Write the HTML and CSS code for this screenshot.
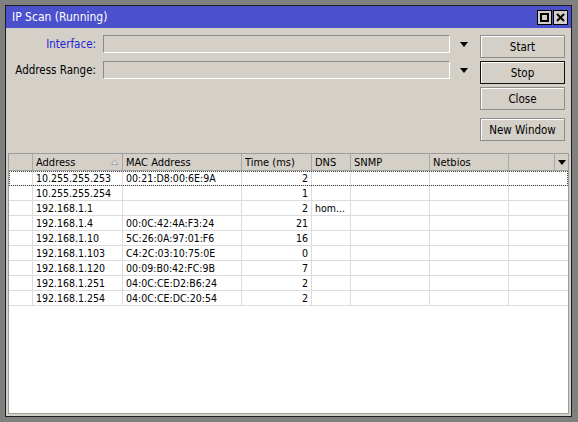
FILE: index.html
```html
<!DOCTYPE html>
<html>
<head>
<meta charset="utf-8">
<link rel="stylesheet" href="styles.css">
</head>
<body>
<div class="window">
  <div class="titlebar">
    <span class="title">IP Scan (Running)</span>
    <div class="tbtns">
      <span class="tbtn"><svg width="13" height="13" viewBox="0 0 13 13"><rect x="3" y="3" width="7" height="7" fill="none" stroke="#000" stroke-width="2"/></svg></span>
      <span class="tbtn"><svg width="13" height="13" viewBox="0 0 13 13"><path d="M3 3 L10 10 M10 3 L3 10" stroke="#000" stroke-width="2"/></svg></span>
    </div>
  </div>
  <div class="body">
    <div class="top">
      <div class="form">
        <div class="frow">
          <span class="lbl blue">Interface:</span>
          <div class="input"></div>
          <span class="drop"><svg width="8" height="5" viewBox="0 0 8 5"><polygon points="0,0 8,0 4,5" fill="#000"/></svg></span>
        </div>
        <div class="frow">
          <span class="lbl">Address Range:</span>
          <div class="input"></div>
          <span class="drop"><svg width="8" height="5" viewBox="0 0 8 5"><polygon points="0,0 8,0 4,5" fill="#000"/></svg></span>
        </div>
      </div>
      <div class="buttons">
        <div class="btn">Start</div>
        <div class="btn default">Stop</div>
        <div class="btn">Close</div>
        <div class="btn spaced">New Window</div>
      </div>
    </div>
    <div class="table">
      <div class="hrow">
        <div class="hc"></div>
        <div class="hc sort"><span>Address</span><svg width="7" height="6" viewBox="0 0 7 6"><polygon points="3.5,0.5 6.5,5.5 0.5,5.5" fill="#e4e2dc" stroke="#a8a8a8" stroke-width="1"/></svg></div>
        <div class="hc">MAC Address</div>
        <div class="hc">Time (ms)</div>
        <div class="hc">DNS</div>
        <div class="hc">SNMP</div>
        <div class="hc">Netbios</div>
        <div class="hc last"><span class="hdrop"><svg width="8" height="5" viewBox="0 0 8 5"><polygon points="0,0 8,0 4,5" fill="#000"/></svg></span></div>
      </div>
      <div class="row focus"><div class="c"></div><div class="c">10.255.255.253</div><div class="c">00:21:D8:00:6E:9A</div><div class="c num">2</div><div class="c"></div><div class="c"></div><div class="c"></div><div class="c"></div></div>
      <div class="row"><div class="c"></div><div class="c">10.255.255.254</div><div class="c"></div><div class="c num">1</div><div class="c"></div><div class="c"></div><div class="c"></div><div class="c"></div></div>
      <div class="row"><div class="c"></div><div class="c">192.168.1.1</div><div class="c"></div><div class="c num">2</div><div class="c">hom...</div><div class="c"></div><div class="c"></div><div class="c"></div></div>
      <div class="row"><div class="c"></div><div class="c">192.168.1.4</div><div class="c">00:0C:42:4A:F3:24</div><div class="c num">21</div><div class="c"></div><div class="c"></div><div class="c"></div><div class="c"></div></div>
      <div class="row"><div class="c"></div><div class="c">192.168.1.10</div><div class="c">5C:26:0A:97:01:F6</div><div class="c num">16</div><div class="c"></div><div class="c"></div><div class="c"></div><div class="c"></div></div>
      <div class="row"><div class="c"></div><div class="c">192.168.1.103</div><div class="c">C4:2C:03:10:75:0E</div><div class="c num">0</div><div class="c"></div><div class="c"></div><div class="c"></div><div class="c"></div></div>
      <div class="row"><div class="c"></div><div class="c">192.168.1.120</div><div class="c">00:09:B0:42:FC:9B</div><div class="c num">7</div><div class="c"></div><div class="c"></div><div class="c"></div><div class="c"></div></div>
      <div class="row"><div class="c"></div><div class="c">192.168.1.251</div><div class="c">04:0C:CE:D2:B6:24</div><div class="c num">2</div><div class="c"></div><div class="c"></div><div class="c"></div><div class="c"></div></div>
      <div class="row"><div class="c"></div><div class="c">192.168.1.254</div><div class="c">04:0C:CE:DC:20:54</div><div class="c num">2</div><div class="c"></div><div class="c"></div><div class="c"></div><div class="c"></div></div>
    </div>
  </div>
</div>
</body>
</html>
```
FILE: styles.css
```css
html, body {
  margin: 0;
  padding: 0;
}
body {
  background: #808080;
  width: 578px;
  height: 422px;
  overflow: hidden;
  font-family: "DejaVu Sans Condensed", "DejaVu Sans", sans-serif;
  font-size: 11.5px;
  color: #000;
}
.window {
  margin: 5px 0 0 5px;
  width: 567px;
  height: 412px;
  box-sizing: border-box;
  border: 1px solid #1c1c1c;
  background: #d4d0c8;
  display: flex;
  flex-direction: column;
}
.titlebar {
  height: 22px;
  flex: none;
  background: #4b50cc;
  display: flex;
  align-items: center;
  padding: 0 3px 0 6px;
  color: #fff;
  font-size: 12px;
}
.title {
  flex: 1;
}
.tbtns {
  display: flex;
  gap: 1px;
}
.tbtn {
  width: 15px;
  height: 15px;
  box-sizing: border-box;
  border: 1px solid #000;
  background: #d4d0c8;
  display: flex;
}
.body {
  flex: 1;
  display: flex;
  flex-direction: column;
  padding: 7px 2px 2px 2px;
  min-height: 0;
}
.top {
  display: flex;
  height: 106px;
  flex: none;
}
.form {
  flex: 1;
  display: flex;
  flex-direction: column;
  gap: 8px;
}
.frow {
  display: flex;
  align-items: center;
  height: 18px;
}
.lbl {
  width: 88px;
  padding-right: 7px;
  box-sizing: content-box;
  text-align: right;
  white-space: nowrap;
}
.lbl.blue {
  color: #2323d6;
}
.input {
  width: 347px;
  height: 18px;
  box-sizing: border-box;
  border-style: solid;
  border-width: 1px;
  border-color: #8a8a8a #ffffff #ffffff #8a8a8a;
  background: #d4d0c8;
}
.drop {
  flex: 1;
  display: flex;
  justify-content: center;
  align-items: center;
  padding-right: 2px;
}
.buttons {
  width: 85px;
  margin-right: 4px;
  display: flex;
  flex-direction: column;
  gap: 3px;
}
.btn {
  height: 23px;
  box-sizing: border-box;
  border: 1px solid #8c8c8c;
  box-shadow: inset 1px 1px #ffffff;
  display: flex;
  align-items: center;
  justify-content: center;
  white-space: nowrap;
}
.btn.default {
  border-color: #111;
}
.btn.spaced {
  margin-top: 5px;
}
.table {
  margin-top: 12px;
  flex: 1;
  background: #fff;
  border: 1px solid #9c9c9c;
  display: flex;
  flex-direction: column;
  min-height: 0;
  font-size: 11px;
}
.hrow, .row {
  display: grid;
  grid-template-columns: 24px 90px 119px 70px 39px 79px 79px 1fr;
}
.hrow {
  height: 17px;
  background: #d4d0c8;
  border-bottom: 1px solid #a0a0a0;
  box-sizing: border-box;
}
.hc {
  border-right: 1px solid #a8a8a8;
  padding: 0 3px;
  display: flex;
  align-items: center;
  white-space: nowrap;
  overflow: hidden;
}
.hc.sort {
  justify-content: space-between;
  padding-right: 4px;
}
.hc.last {
  border-right: none;
  padding: 0;
  justify-content: flex-end;
}
.hdrop {
  width: 14px;
  height: 100%;
  box-sizing: border-box;
  border-left: 1px solid #a8a8a8;
  display: flex;
  align-items: center;
  justify-content: center;
}
.row {
  height: 15px;
  box-sizing: border-box;
  border-bottom: 1px solid #dcdcdc;
  font-size: 10.5px;
}
.row.focus {
  outline: 1px dotted #444;
  outline-offset: -1px;
}
.c {
  border-right: 1px solid #dcdcdc;
  padding: 0 3px;
  display: flex;
  align-items: center;
  white-space: nowrap;
  overflow: hidden;
}
.c:last-child {
  border-right: none;
}
.c.num {
  justify-content: flex-end;
  padding-right: 3px;
}
```
